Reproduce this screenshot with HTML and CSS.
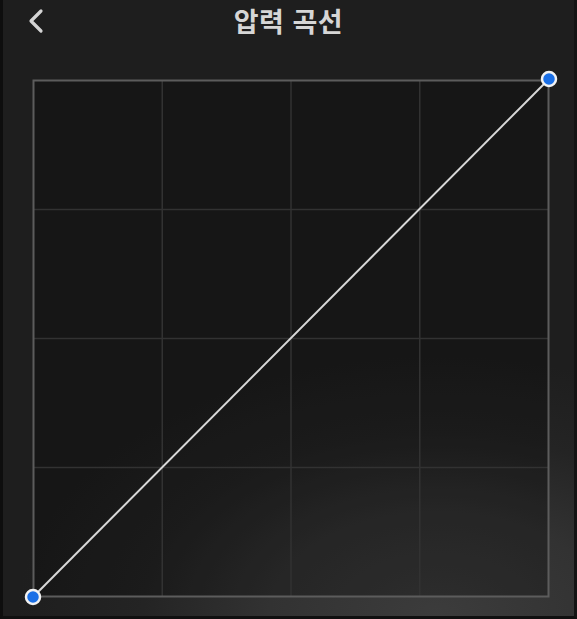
FILE: index.html
```html
<!DOCTYPE html>
<html lang="ko">
<head>
<meta charset="utf-8">
<link rel="stylesheet" href="styles.css">
</head>
<body>
<div class="screen">
  <header class="topbar">
    <svg class="back" width="22" height="26" viewBox="0 0 22 26">
      <path d="M15 3 L5 13 L15 23" fill="none" stroke="#d4d4d4" stroke-width="3.2" stroke-linecap="round" stroke-linejoin="round"/>
    </svg>
    <h1 class="title">압력 곡선</h1>
  </header>
  <svg class="chart" width="571" height="570" viewBox="0 0 571 570">
    <rect x="30.5" y="34.5" width="515" height="516" fill="rgba(0,0,0,0.24)"/>
    <g stroke="#323232" stroke-width="1.5">
      <line x1="159.25" y1="34.5" x2="159.25" y2="550.5"/>
      <line x1="288" y1="34.5" x2="288" y2="550.5"/>
      <line x1="416.75" y1="34.5" x2="416.75" y2="550.5"/>
      <line x1="30.5" y1="163.5" x2="545.5" y2="163.5"/>
      <line x1="30.5" y1="292.5" x2="545.5" y2="292.5"/>
      <line x1="30.5" y1="421.5" x2="545.5" y2="421.5"/>
    </g>
    <rect x="30.5" y="34.5" width="515" height="516" fill="none" stroke="#5c5c5c" stroke-width="2"/>
    <line x1="30" y1="551" x2="546" y2="33" stroke="#d8d8d8" stroke-width="2"/>
    <circle cx="546" cy="33" r="7" fill="#1a6fe6" stroke="#f2f2f2" stroke-width="2.5"/>
    <circle cx="30" cy="551" r="7" fill="#1a6fe6" stroke="#f2f2f2" stroke-width="2.5"/>
  </svg>
</div>
</body>
</html>
```

FILE: styles.css
```css
html, body {
  margin: 0;
  padding: 0;
  background: #0e0e0e;
}
.screen {
  width: 571px;
  height: 616px;
  border-left: 3px solid #0e0e0e;
  border-right: 3px solid #141414;
  border-bottom: 3px solid #101010;
  background:
    radial-gradient(ellipse 420px 260px at 76% 100%, #3c3c3c 0%, #323232 40%, rgba(40,40,40,0.6) 70%, rgba(30,30,30,0) 100%),
    #1e1e1e;
  overflow: hidden;
}
.topbar {
  position: relative;
  height: 46px;
  display: flex;
  align-items: center;
  justify-content: center;
}
.back {
  position: absolute;
  left: 23px;
  top: 8px;
}
.title {
  margin: 0;
  font-family: "Noto Sans CJK KR", "Noto Sans", sans-serif;
  font-weight: 700;
  font-size: 27px;
  color: #d6d6d6;
  letter-spacing: 0.5px;
  position: relative;
  top: -3px;
}
.chart {
  display: block;
}
```
